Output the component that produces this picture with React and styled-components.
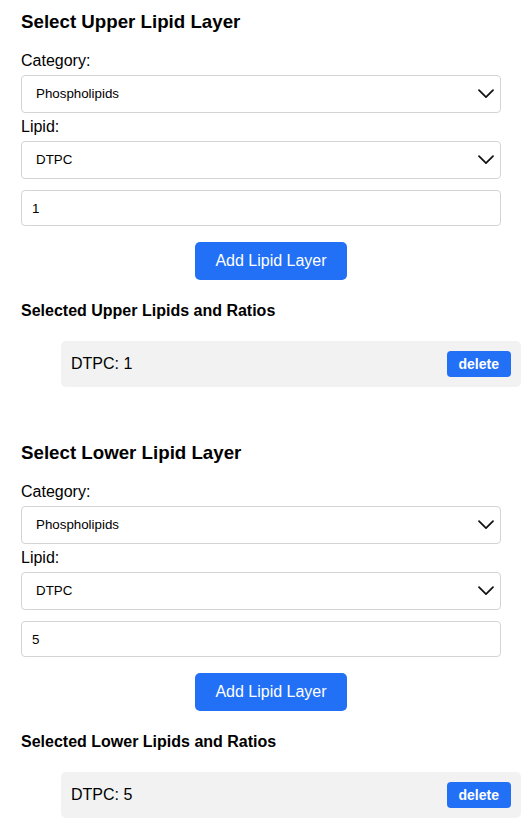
import React from "react";
import styled, { createGlobalStyle } from "styled-components";

const GlobalStyle = createGlobalStyle`
  html, body {
    margin: 0;
    padding: 0;
    background: #ffffff;
  }
  body {
    font-family: "Liberation Sans", Arial, Helvetica, sans-serif;
    color: #000000;
  }
`;

const Page = styled.div`
  width: 500px;
  padding: 0 11px 0 21px;
`;

const Section = styled.section`
  padding-top: 10.5px;
  display: flex;
  flex-direction: column;
`;

const Title = styled.h3`
  margin: 0 0 14px;
  font-size: 18.72px;
  line-height: 22px;
  font-weight: bold;
`;

const Label = styled.label`
  display: block;
  margin: 5px 0;
  font-size: 16px;
  line-height: 18px;
`;

const SelectWrap = styled.div`
  position: relative;
  width: 480px;
`;

const Select = styled.select`
  appearance: none;
  -webkit-appearance: none;
  display: block;
  width: 100%;
  height: 38px;
  box-sizing: border-box;
  padding: 0 36px 0 14px;
  border: 1px solid #d4d4d4;
  border-radius: 4px;
  background: #ffffff;
  font-family: "Liberation Sans", Arial, sans-serif;
  font-size: 13.33px;
  color: #000000;
  outline: none;
`;

const Chevron = styled.svg`
  position: absolute;
  right: 7px;
  top: 14px;
  width: 16px;
  height: 10px;
  pointer-events: none;
`;

const Input = styled.input`
  display: block;
  width: 480px;
  height: 36px;
  box-sizing: border-box;
  margin-top: 11.5px;
  padding: 0 10px;
  border: 1px solid #d4d4d4;
  border-radius: 4px;
  font-family: "Liberation Sans", Arial, sans-serif;
  font-size: 13.33px;
  color: #000000;
  outline: none;
`;

const PrimaryButton = styled.button`
  align-self: center;
  margin-top: 16px;
  height: 38px;
  padding: 0 20px;
  border: none;
  border-radius: 5px;
  background: #2170f6;
  color: #ffffff;
  font-family: "Liberation Sans", Arial, sans-serif;
  font-size: 16px;
  cursor: pointer;
`;

const SubTitle = styled.h4`
  margin: 21.5px 0 0;
  font-size: 16px;
  line-height: 18px;
  font-weight: bold;
`;

const List = styled.ul`
  list-style: none;
  margin: 21.5px 0 44px;
  padding: 0 0 0 40px;
`;

const Item = styled.li`
  display: flex;
  align-items: center;
  justify-content: space-between;
  padding: 10px;
  background: #f2f2f2;
  border-radius: 5px;
  font-size: 16px;
  line-height: 18px;
`;

const DeleteButton = styled.button`
  height: 26px;
  padding: 0 12px;
  border: none;
  border-radius: 4px;
  background: #2170f6;
  color: #ffffff;
  font-family: "Liberation Sans", Arial, sans-serif;
  font-size: 14px;
  font-weight: bold;
  cursor: pointer;
`;

const ChevronIcon = () => (
  <Chevron viewBox="0 0 16 10" fill="none">
    <path d="M1 1.2 L8 8.2 L15 1.2" stroke="#111" strokeWidth="1.7" strokeLinecap="round" strokeLinejoin="round" />
  </Chevron>
);

const Dropdown = ({ value, options }) => (
  <SelectWrap>
    <Select defaultValue={value}>
      {options.map((o) => (
        <option key={o} value={o}>
          {o}
        </option>
      ))}
    </Select>
    <ChevronIcon />
  </SelectWrap>
);

const LayerSection = ({ which, ratio }) => (
  <Section>
    <Title>Select {which} Lipid Layer</Title>
    <Label>Category:</Label>
    <Dropdown value="Phospholipids" options={["Phospholipids", "Sterols", "Sphingolipids"]} />
    <Label>Lipid:</Label>
    <Dropdown value="DTPC" options={["DTPC", "DOPC", "DPPC", "POPC"]} />
    <Input type="text" defaultValue={ratio} />
    <PrimaryButton>Add Lipid Layer</PrimaryButton>
    <SubTitle>Selected {which} Lipids and Ratios</SubTitle>
    <List>
      <Item>
        <span>DTPC: {ratio}</span>
        <DeleteButton>delete</DeleteButton>
      </Item>
    </List>
  </Section>
);

export default function App() {
  return (
    <>
      <GlobalStyle />
      <Page>
        <LayerSection which="Upper" ratio="1" />
        <LayerSection which="Lower" ratio="5" />
      </Page>
    </>
  );
}
